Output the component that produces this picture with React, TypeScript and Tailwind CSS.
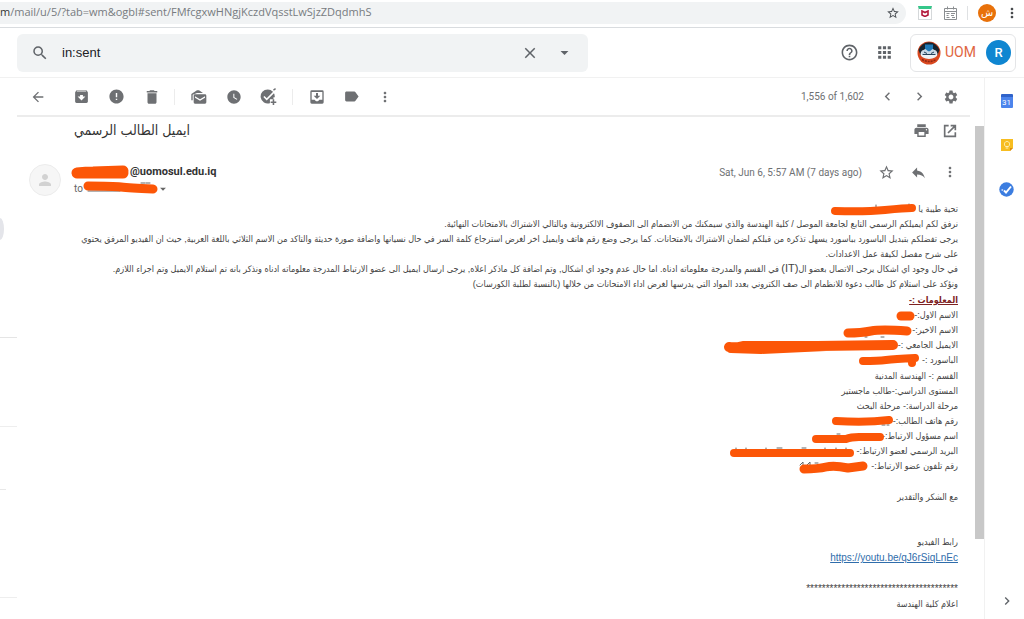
import type { ReactNode } from 'react'
import {
  MdApps,
  MdArchive,
  MdArrowBack,
  MdArrowDropDown,
  MdChevronLeft,
  MdChevronRight,
  MdClose,
  MdDelete,
  MdError,
  MdHelpOutline,
  MdLabel,
  MdMoreVert,
  MdPerson,
  MdPrint,
  MdReply,
  MdSearch,
  MdSettings,
  MdStarBorder,
  MdWatchLater,
} from 'react-icons/md'

function IconButton({ label, className = '', children }: { label: string; className?: string; children: ReactNode }) {
  return (
    <button type="button" aria-label={label} className={`flex shrink-0 items-center justify-center ${className}`}>
      {children}
    </button>
  )
}

/* Hand-drawn marker stroke that hides private details. */
function Marker({ d, width, height = 14, stroke = 9, className, specks }: { d: string; width: number; height?: number; stroke?: number; className: string; specks?: string }) {
  return (
    <svg aria-hidden="true" width={width} height={height} viewBox={`0 0 ${width} ${height}`} className={`absolute ${className}`} fill="none" strokeLinecap="round" strokeLinejoin="round">
      {specks && <path d={specks} stroke="#666" strokeWidth="1" />}
      <path d={d} stroke="#fc5607" strokeWidth={stroke} />
    </svg>
  )
}

function MailStack() {
  return (
    <svg width="16" height="16" viewBox="0 0 24 24" fill="currentColor" aria-hidden="true">
      <path d="M2.5 17H.5V7.500L9 2h3l6 4H9L2.500 8.500z" />
      <path fillRule="evenodd" d="M6 8h15a2 2 0 0 1 2 2v10a2 2 0 0 1-2 2H6a2 2 0 0 1-2-2V10a2 2 0 0 1 2-2zm0 3v2l7.500 4.500L21 13v-2l-7.500 4.500z" />
    </svg>
  )
}

function AddTask() {
  return (
    <svg width="17" height="17" viewBox="0 0 24 24" aria-hidden="true">
      <path fill="currentColor" d="M11 2a10 10 0 1 0 3 19.500V16h5v-3h1.800A10 10 0 0 0 11 2z" />
      <path d="M5.500 12l4 4L20 5.500" fill="none" stroke="#fff" strokeWidth="2.200" />
      <path d="M19 16v8M15 20h8" stroke="currentColor" strokeWidth="2.200" />
      <path d="M19 3l3-2" stroke="currentColor" strokeWidth="2" />
    </svg>
  )
}

function MoveTo() {
  return (
    <svg width="16" height="16" viewBox="0 0 24 24" fill="currentColor" aria-hidden="true">
      <path fillRule="evenodd" d="M4 2h16a2 2 0 0 1 2 2v16a2 2 0 0 1-2 2H4a2 2 0 0 1-2-2V4a2 2 0 0 1 2-2zm0 2.500V16h4.500c.8 1.500 2 2.200 3.500 2.200s2.700-.7 3.500-2.200H20V4.500z" />
      <path d="M10.500 6h3v4H17l-5 5-5-5h3.500z" />
    </svg>
  )
}

function OpenWindow() {
  return (
    <svg width="16" height="16" viewBox="0 0 24 24" fill="none" stroke="currentColor" strokeWidth="2.500" aria-hidden="true">
      <path d="M10 4H4v16h16v-6M13 4h7v7M20 4L9 15" />
    </svg>
  )
}

function UniversitySeal() {
  return (
    <svg width="24" height="24" viewBox="0 0 24 24" aria-hidden="true">
      <circle cx="12" cy="12" r="11.500" fill="#d9481f" />
      <path d="M1.500 9a11 11 0 0 1 21 0l-2 5h-17z" fill="#18242f" />
      <ellipse cx="12" cy="13" rx="8.500" ry="5" fill="#eef2f5" />
      <path d="M8 3.500h8v7H8z" fill="#2079b8" />
      <path d="M4.500 10l4-2 3.500 3 3.500-3 4 2v3H4.500z" fill="#c9d9e5" />
      <path d="M5.500 13.500h13M7 11l3 1.500M17 11l-3 1.500" stroke="#25435b" strokeWidth="1" />
      <path d="M5 18.500q7 4 14 0" fill="none" stroke="#8f2814" strokeWidth="1.500" strokeDasharray="2 1" />
    </svg>
  )
}

function BrowserBar() {
  return (
    <div className="flex h-7 items-center border-b border-[#d9dcdf] bg-white pr-1">
      <div className="mb-0.5 flex h-[22px] flex-1 items-center rounded-r-full bg-[#f1f3f4] pr-1.5 font-['Open_Sans',sans-serif] text-[11px] text-[#777b80]">
        <span className="text-[#333]">m</span>
        <input
          aria-label="Address"
          readOnly
          value="/mail/u/5/?tab=wm&ogbl#sent/FMfcgxwHNgjKczdVqsstLwSjzZDqdmhS"
          className="min-w-0 flex-1 bg-transparent outline-none"
        />
        <IconButton label="Bookmark this page"><MdStarBorder className="size-3.5 text-[#4d5156]" /></IconButton>
      </div>
      <div className="mb-0.5 flex items-center">
        <IconButton label="Security extension" className="ml-3 h-3.5 w-3.5 border border-[#d5d8da] border-t-[3px] border-t-[#35c78a]">
          <svg width="8" height="7" viewBox="0 0 8 7" aria-hidden="true"><path d="M1 1l3 1.500L7 1v4L4 6.500 1 5z" fill="none" stroke="#b3193b" strokeWidth="1.600" /></svg>
        </IconButton>
        <IconButton label="Calendar extension" className="ml-3">
          <svg width="13" height="14" viewBox="0 0 13 14" fill="none" stroke="#8b8e91" aria-hidden="true">
            <path d="M.5 2.500h12v11H.5zM.5 5.500h12M3.500.5v3M9.500.5v3M2.500 7.500h3M2.500 9.500h2M2.500 11.500h3M7 7.500h4M7 9.500h3M8 11.500h3" />
          </svg>
        </IconButton>
        <span className="mx-2.5 h-3.5 w-px bg-[#dfe1e3]" />
        <button type="button" aria-label="Profile" className="flex size-[18px] items-center justify-center rounded-full bg-[#e8710a] font-['DejaVu_Sans',sans-serif] text-[10px] leading-none text-white">ش</button>
        <IconButton label="Browser menu" className="ml-2"><MdMoreVert className="size-4 text-[#44474a]" /></IconButton>
      </div>
    </div>
  )
}

function Header() {
  return (
    <header className="flex h-[50px] items-center border-b border-[#f1f1f1] pr-2 pl-[17px]">
      <form role="search" className="flex h-[38px] max-w-[571px] flex-1 items-center rounded-md bg-[#f1f3f4] px-3.5 text-[#5f6368]">
        <IconButton label="Search mail"><MdSearch className="size-[18px]" /></IconButton>
        <input aria-label="Search mail" defaultValue="in:sent" className="ml-[13px] min-w-0 flex-1 bg-transparent font-['Liberation_Sans',sans-serif] text-[13px] text-[#202124] outline-none" />
        <IconButton label="Clear search"><MdClose className="size-[18px]" /></IconButton>
        <IconButton label="Show search options" className="ml-4"><MdArrowDropDown className="size-[19px]" /></IconButton>
      </form>
      <div className="ml-auto flex items-center text-[#5f6368]">
        <IconButton label="Support"><MdHelpOutline className="size-[19px]" /></IconButton>
        <IconButton label="Google apps" className="ml-4"><MdApps className="size-[19px]" /></IconButton>
        <div className="ml-4 flex h-[38px] w-[106px] items-center rounded-md border border-[#e4e5e7] pl-1.5">
          <UniversitySeal />
          <span className="ml-1 text-[14px] text-[#e0663f]">UOM</span>
          <button type="button" aria-label="Account" className="mr-1 ml-auto flex size-[25px] items-center justify-center rounded-full bg-[#0f86d1] text-[13px] font-medium text-white">R</button>
        </div>
      </div>
    </header>
  )
}

function Toolbar() {
  return (
    <div className="flex h-[39px] items-center border-b-2 border-[#ececec] pr-[11px] pl-3 text-[#6e7073]">
      <IconButton label="Back" className="size-[18px]"><MdArrowBack className="size-4" /></IconButton>
      <div className="ml-[25px] flex items-center gap-4">
        <IconButton label="Archive" className="size-[19px]"><MdArchive className="size-[17px]" /></IconButton>
        <IconButton label="Report spam" className="size-[19px]"><MdError className="size-[17px]" /></IconButton>
        <IconButton label="Delete" className="size-[19px]"><MdDelete className="size-[18px]" /></IconButton>
      </div>
      <span className="ml-[13px] h-4 w-px bg-[#ececec]" />
      <div className="ml-3.5 flex items-center gap-4">
        <IconButton label="Mark as unread" className="size-[19px]"><MailStack /></IconButton>
        <IconButton label="Snooze" className="size-[19px]"><MdWatchLater className="size-4" /></IconButton>
        <IconButton label="Add to tasks" className="size-[19px]"><AddTask /></IconButton>
      </div>
      <span className="ml-3.5 h-4 w-px bg-[#ececec]" />
      <div className="ml-3.5 flex items-center gap-4">
        <IconButton label="Move to" className="size-[19px]"><MoveTo /></IconButton>
        <IconButton label="Labels" className="size-[19px]"><MdLabel className="size-[17px]" /></IconButton>
        <IconButton label="More" className="size-4"><MdMoreVert className="size-4" /></IconButton>
      </div>
      <span className="ml-auto text-[10px] text-[#6e7073]">1,556 of 1,602</span>
      <IconButton label="Newer" className="ml-[15px]"><MdChevronLeft className="size-[17px]" /></IconButton>
      <IconButton label="Older" className="ml-[15px]"><MdChevronRight className="size-[17px]" /></IconButton>
      <IconButton label="Settings" className="ml-[15px]"><MdSettings className="size-4" /></IconButton>
    </div>
  )
}

function Line({ children, marker }: { children?: ReactNode; marker?: ReactNode }) {
  return (
    <p className="relative min-h-[15px] whitespace-nowrap">
      {children}
      {marker}
    </p>
  )
}

function MessageBody() {
  return (
    <div dir="rtl" className="mt-1 flex flex-col gap-px font-['Liberation_Sans','DejaVu_Sans_Condensed','DejaVu_Sans',sans-serif] text-[9px] leading-[15px] text-[#444]">
      <div>
        <Line marker={<Marker className="top-px right-[41px]" width={87} d="M5 8Q35 9 55 7T82 5" stroke={8} specks="M46 2v2M79 1v2" />}>تحية طيبة يا</Line>
        <Line>نرفق لكم ايميلكم الرسمي التابع لجامعة الموصل / كلية الهندسة والذي سيمكنك من الانضمام الى الصفوف الالكترونية وبالتالي الاشتراك بالامتحانات النهائية.</Line>
        <Line>يرجى تفضلكم بتبديل الباسورد بباسورد يسهل تذكره من قبلكم لضمان الاشتراك بالامتحانات. كما يرجى وضع رقم هاتف وايميل اخر لغرض استرجاع كلمة السر في حال نسيانها واضافة صورة حديثة والتاكد من الاسم الثلاثي باللغة العربية, حيث ان الفيديو المرفق يحتوي</Line>
        <Line>على شرح مفصل لكيفة عمل الاعدادات.</Line>
        <Line>في حال وجود اي اشكال يرجى الاتصال بعضو ال<span className="text-[11px] leading-none">(IT)</span> في القسم والمدرجة معلوماته ادناه. اما حال عدم وجود اي اشكال, وتم اضافة كل ماذكر اعلاه, يرجى ارسال ايميل الى عضو الارتباط المدرجة معلوماته ادناه ونذكر بانه تم استلام الايميل وتم اجراء اللازم.</Line>
        <Line>ونؤكد على استلام كل طالب دعوة للانظمام الى صف الكتروني بعدد المواد التي يدرسها لغرض اداء الامتحانات من خلالها (بالنسبة لطلبة الكورسات)</Line>
      </div>
      <div>
        <Line><b className="text-[#7e2222] underline">المعلومات :-</b></Line>
        <Line marker={<Marker className="top-px right-[43px]" width={19} d="M5 7h9" />}>الاسم الاول:-</Line>
        <Line marker={<Marker className="top-px right-[45px]" width={70} d="M5 9Q18 9 28 7T64 7" specks="M38 13h3M22 13h2" />}>الاسم الاخير:-</Line>
        <Line marker={<Marker className="top-px right-[59px]" width={176} height={16} d="M6 8Q12 9 20 7L94 7 170 6M8 9l30 1 65-3" stroke={10} />}>الايميل الجامعي :-</Line>
        <Line marker={<Marker className="top-px right-[38px]" width={62} d="M5 7Q20 7 28 6T57 4M54 5v4" stroke={8} />}>الباسورد :-</Line>
      </div>
      <div>
        <Line>القسم :- الهندسة المدنية</Line>
        <Line>المستوى الدراسي:-طالب ماجستير</Line>
        <Line>مرحلة الدراسة:- مرحلة البحث</Line>
        <Line marker={<Marker className="top-px right-16" width={63} d="M5 6Q35 8 58 5" stroke={8} specks="M51 10h3M56 10h2" />}>رقم هاتف الطالب:-</Line>
        <Line marker={<Marker className="top-px right-[73px]" width={74} d="M5 9h30Q40 7 48 7h21" stroke={8} specks="M26 4h3" />}>اسم مسؤول الارتباط:-</Line>
        <Line marker={<Marker className="top-px right-[103px]" width={126} d="M5 8h116" specks="M7 3v2M17 3v2M37 3v2M48 3h5M73 3h4M96 3v2M107 3v2M117 3v2" stroke={8} />}>البريد الرسمي لعضو الارتباط:-</Line>
        <Line marker={<Marker className="top-px right-[88px]" width={72} d="M6 9Q20 9 28 7T50 8L65 6" specks="M2 5l3-3v3M9 5l3-3v3M17 3h3" />}>رقم تلفون عضو الارتباط:-</Line>
      </div>
      <div>
        <Line />
        <Line>مع الشكر والتقدير</Line>
        <Line />
        <Line />
        <Line>رابط الفيديو</Line>
        <Line><a href="https://youtu.be/qJ6rSiqLnEc" dir="ltr" className="text-[10px] text-[#2f6dab] underline">https://youtu.be/qJ6rSiqLnEc</a></Line>
        <Line />
        <Line><span className="text-[10px]">***************************************</span></Line>
        <Line>اعلام كلية الهندسة</Line>
      </div>
    </div>
  )
}

function Message() {
  return (
    <article className="min-w-0 flex-1 pr-[17px] pl-3">
      <div className="flex h-[27px] items-center pl-[45px]">
        <h1 dir="rtl" className="font-['DejaVu_Sans_Condensed','DejaVu_Sans',sans-serif] text-[14px] text-[#333]">ايميل الطالب الرسمي</h1>
        <div className="ml-auto flex gap-3 text-[#6e7073]">
          <IconButton label="Print all"><MdPrint className="size-[17px]" /></IconButton>
          <IconButton label="In new window"><OpenWindow /></IconButton>
        </div>
      </div>
      <div className="mt-[18px] flex h-9 items-center">
        <span className="flex size-8 items-center justify-center rounded-full border border-[#ececec] bg-[#f6f6f6]">
          <MdPerson className="size-[18px] text-[#d2d2d2]" />
        </span>
        <div className="relative ml-[13px] flex h-9 flex-col">
          <span className="pl-14 text-[11px] leading-5 font-bold text-[#333]">@uomosul.edu.iq</span>
          <div className="flex items-center text-[10px] leading-3 text-[#666]">
            to
            <IconButton label="Show details" className="ml-[73px]"><MdArrowDropDown className="size-3.5" /></IconButton>
          </div>
          <Marker className="top-[3px] -left-[3px]" width={59} height={15} d="M6 8Q15 7 22 7L52 6M7 8h45" stroke={11} />
          <Marker className="top-[18px] left-[9px]" width={75} height={15} d="M5 6Q30 6 38 7T70 9" specks="M5 11h32M58 3h4M63 3h4" />
        </div>
        <div className="ml-auto flex items-center pb-4 text-[#6e7073]">
          <time className="text-[10px]">Sat, Jun 6, 5:57 AM (7 days ago)</time>
          <IconButton label="Star" className="ml-4"><MdStarBorder className="size-[17px]" /></IconButton>
          <IconButton label="Reply" className="ml-[15px]"><MdReply className="size-[17px]" /></IconButton>
          <IconButton label="More options" className="ml-[15px]"><MdMoreVert className="size-4" /></IconButton>
        </div>
      </div>
      <MessageBody />
    </article>
  )
}

function SidePanel() {
  return (
    <aside className="flex w-10 shrink-0 flex-col items-center border-l border-[#f1f1f1] pt-4 pb-2.5 pl-1">
      <button type="button" aria-label="Calendar" className="flex h-3.5 w-3 items-center justify-center rounded-[1px] border-t-[3px] border-[#3063ca] bg-[#4c84ec] text-[8px] leading-none text-white">31</button>
      <IconButton label="Keep" className="mt-[30px]">
        <svg width="14" height="14" viewBox="0 0 14 14" aria-hidden="true">
          <path d="M1 1h12v9l-3 3H1z" fill="#f7bd20" /><path d="M13 10l-3 3v-3z" fill="#db8a10" />
          <path d="M5.500 8.500C3.500 6.500 4.500 3.500 7 3.500S10.500 6.500 8.500 8.500zM5.700 10h2.600" fill="none" stroke="#fff0b8" />
        </svg>
      </IconButton>
      <IconButton label="Tasks" className="mt-[30px]">
        <svg width="15" height="15" viewBox="0 0 15 15" aria-hidden="true">
          <circle cx="7.500" cy="7.500" r="7.200" fill="#3c7de0" /><circle cx="3.300" cy="8" r="1" fill="#bcd4fa" />
          <path d="M5 8.500l2 2L12 4.500" fill="none" stroke="#fff" strokeWidth="1.900" />
        </svg>
      </IconButton>
      <IconButton label="Hide side panel" className="mt-auto"><MdChevronRight className="size-4 text-[#5f6368]" /></IconButton>
    </aside>
  )
}

export default function App() {
  return (
    <div className="flex min-h-screen flex-col overflow-hidden bg-white font-['Roboto',sans-serif]">
      <BrowserBar />
      <Header />
      <div className="flex flex-1">
        <nav aria-label="Folders" className="w-[17px] shrink-0 pt-[140px]">
          <div className="h-[22px] w-1 rounded-[0_100%_100%_0/0_50%_50%_0] bg-[#e4e5ea]" />
          <div className="mt-[97px] h-px bg-[#e5e5e5]" />
          <div className="mt-[88px] h-px bg-[#eeeeee]" />
          <div className="mt-[62px] h-px w-1.5 bg-[#e8e8e8]" />
          <div className="mt-[107px] h-px bg-[#eeeeee]" />
        </nav>
        <main className="flex min-w-0 flex-1 flex-col">
          <div className="pr-3.5"><Toolbar /></div>
          <div className="flex flex-1">
            <Message />
            <div className="mt-[9px] h-[413px] w-[9px] shrink-0 bg-[#c8c8c8]" />
          </div>
        </main>
        <SidePanel />
      </div>
    </div>
  )
}
